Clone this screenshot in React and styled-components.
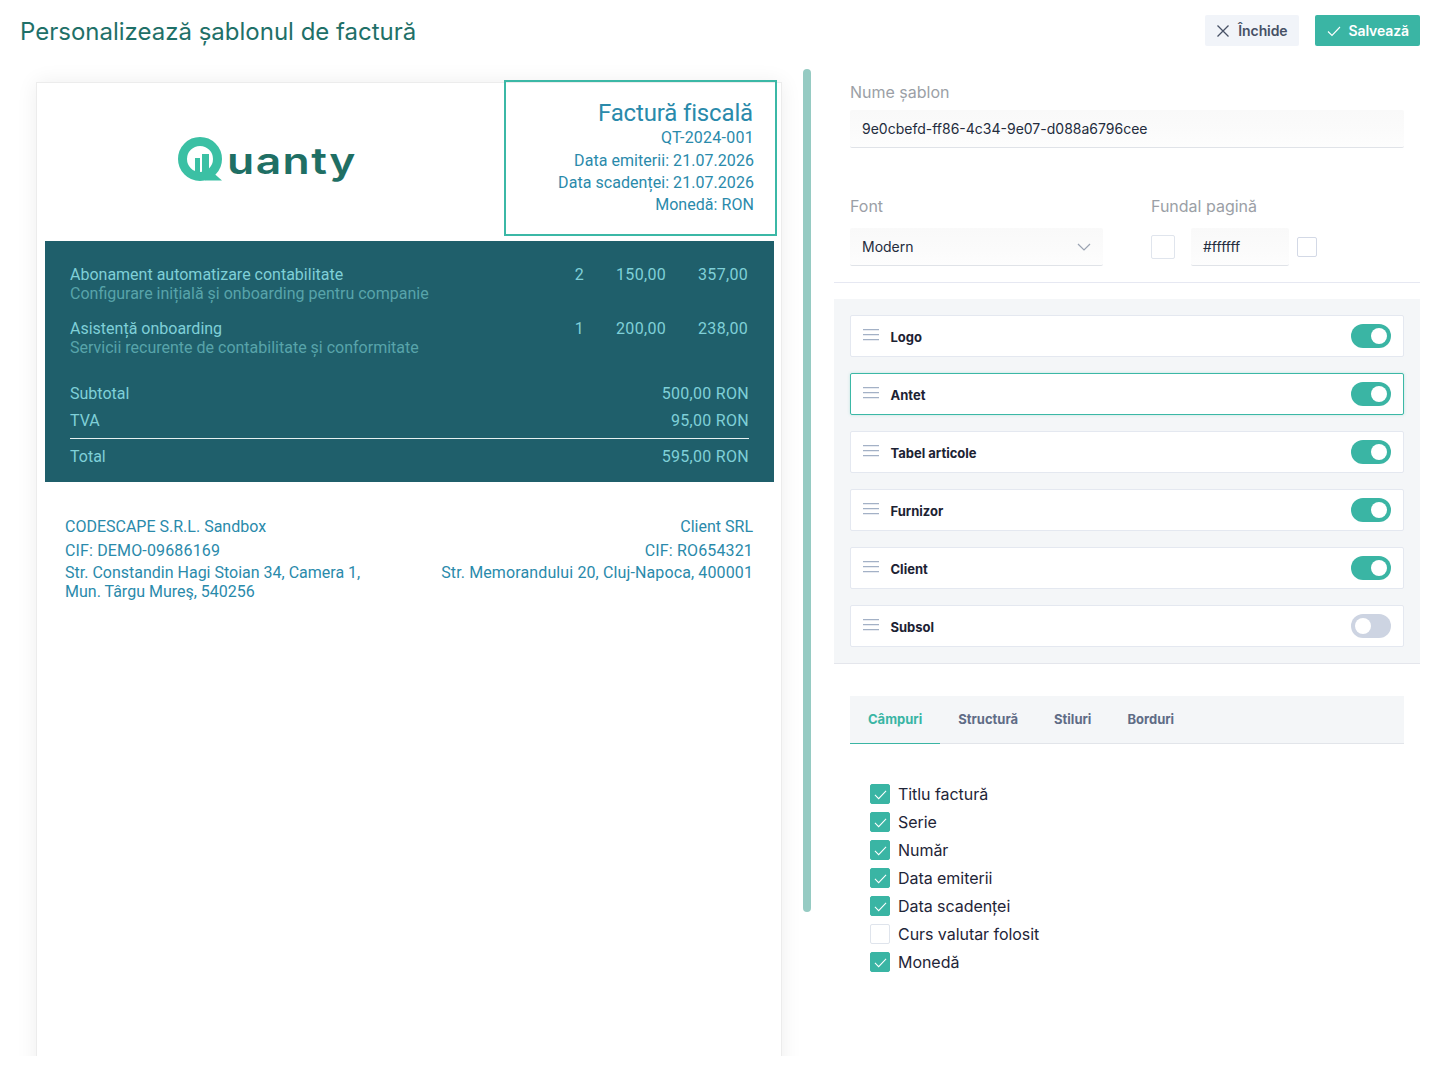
import React from "react";
import styled, { createGlobalStyle } from "styled-components";

const GlobalStyle = createGlobalStyle`
  html, body { margin: 0; padding: 0; background: #fff; }
  body { font-family: "Inter", "Liberation Sans", sans-serif; }
  * { box-sizing: border-box; }
`;

const Page = styled.div`
  width: 1439px;
  height: 1075px;
  overflow: hidden;
  background: #fff;
`;

const Header = styled.header`
  height: 61px;
  padding: 15px 19px 0 20px;
  display: flex;
  justify-content: space-between;
  align-items: flex-start;
`;

const Title = styled.h1`
  margin: 0;
  font-size: 24px;
  line-height: 33px;
  font-weight: 400;
  color: #1f7068;
`;

const Actions = styled.div`
  display: flex;
  gap: 16px;
`;

const Button = styled.button`
  height: 31px;
  padding: 0 11px 0 ${(p) => (p.$primary ? "12px" : "11px")};
  display: flex;
  align-items: center;
  gap: 8px;
  border: 0;
  border-radius: 2px;
  font-family: inherit;
  font-size: 14px;
  font-weight: 600;
  letter-spacing: -0.1px;
  background: ${(p) => (p.$primary ? "#3ab5a4" : "#f1f4f9")};
  color: ${(p) => (p.$primary ? "#fff" : "#475166")};
`;

const Body = styled.div`
  display: flex;
  height: 995px;
`;

const PreviewPane = styled.div`
  position: relative;
  width: 834px;
  height: 100%;
  padding: 21px 0 0 36px;
  overflow: hidden;
`;

const ScrollThumb = styled.div`
  position: absolute;
  left: 803px;
  top: 8px;
  width: 8px;
  height: 843px;
  border-radius: 4px;
  background: #96cbc3;
`;

const Paper = styled.div`
  width: 746px;
  min-height: 1100px;
  border: 1px solid #ececec;
  background: #fff;
  box-shadow: 0 0 20px rgba(0, 0, 0, 0.07);
  font-family: "Roboto", "Liberation Sans", sans-serif;
  font-size: 16px;
  line-height: 19px;
  color: #2a8aab;
`;

const PaperHead = styled.div`
  display: flex;
  margin-bottom: 5px;
`;

const LogoArea = styled.div`
  flex: 1;
  display: flex;
  align-items: center;
  justify-content: center;
  gap: 3px;
  padding-right: 27px;
`;

const LogoWord = styled.span`
  display: inline-block;
  font-family: "Inter", sans-serif;
  font-weight: 600;
  font-size: 37px;
  line-height: 44px;
  letter-spacing: 1.2px;
  color: #1f6f64;
  margin-top: 2px;
  transform: scaleX(1.2);
  transform-origin: left center;
`;

const InvoiceHead = styled.div`
  position: relative;
  width: 273px;
  height: 156px;
  margin: -3px 4px 0 0;
  padding: 17px 21px 0 0;
  border: 2px solid #3bb8a6;
  text-align: right;
`;

const InvoiceTitle = styled.div`
  font-size: 24px;
  line-height: 29px;
  letter-spacing: -0.15px;
  margin-right: 1px;
`;

const InvoiceNumber = styled.div`
  line-height: 22px;
  margin: -1px 0 1px;
  letter-spacing: 0.25px;
`;

const InvoiceLine = styled.div`
  line-height: 22px;
  letter-spacing: 0.05px;
`;

const ItemsBlock = styled.div`
  margin: 0 7px 0 8px;
  padding: 24px 25px 12px;
  background: #1f5f6b;
  color: #7fd0d8;
`;

const ItemRow = styled.div`
  display: flex;
  justify-content: space-between;
  padding-right: 1px;
  margin-bottom: 16px;
`;

const ItemSub = styled.div`
  color: #58a4aa;
`;

const ItemNums = styled.div`
  display: flex;
  gap: 32px;
`;

const ItemNum = styled.span`
  min-width: ${(p) => (p.$wide ? "50px" : "0")};
  text-align: right;
  letter-spacing: 0.3px;
`;

const TotalsBlock = styled.div`
  margin-top: 23px;
`;

const TotalRow = styled.div`
  display: flex;
  justify-content: space-between;
  line-height: 27px;
  ${(p) => p.$final && `
    margin-top: 4px;
    padding-top: 4px;
    border-top: 1px solid #e6f0f0;
  `}
`;

const TotalValue = styled.span`
  letter-spacing: 0.3px;
`;

const Parties = styled.div`
  display: flex;
  justify-content: space-between;
  padding: 35px 28px 0 28px;
`;

const Party = styled.div`
  width: ${(p) => (p.$right ? "auto" : "310px")};
  flex: none;
  text-align: ${(p) => (p.$right ? "right" : "left")};
`;

const PartyName = styled.div`
  margin-bottom: 5px;
`;

const PartyCif = styled.div`
  margin-bottom: 3px;
  letter-spacing: 0.15px;
`;

const AddressRight = styled.div`
  white-space: nowrap;
  letter-spacing: 0.12px;
`;

const Settings = styled.aside`
  width: 586px;
  height: 100%;
`;

const FieldGroup = styled.div`
  padding: ${(p) => p.$pad || "0 16px"};
`;

const FieldLabel = styled.div`
  font-size: 16px;
  line-height: 22px;
  color: #9b9fa6;
  margin-bottom: ${(p) => p.$gap || "7px"};
`;

const TextBox = styled.div`
  height: 38px;
  display: flex;
  align-items: center;
  justify-content: space-between;
  padding: 0 12px;
  font-size: 14px;
  color: #232c3d;
  border-bottom: 1px solid #e0e3e8;
  border-radius: 2px;
  background: linear-gradient(180deg, #f9f9f9 0%, #fbfbfb 60%, #fdfdfd 100%);
  width: ${(p) => p.$width || "auto"};
`;

const FieldRow = styled.div`
  display: flex;
  gap: 48px;
  margin-top: 47px;
  padding: 0 16px 16px;
  border-bottom: 1px solid #e6e8f2;
`;

const ColorRow = styled.div`
  display: flex;
  align-items: center;
`;

const Swatch = styled.div`
  width: ${(p) => p.$size}px;
  height: ${(p) => p.$size}px;
  border: 1px solid ${(p) => (p.$size === 20 ? "#d3d9e6" : "#e0e5ed")};
  border-radius: 2px;
  background: #fff;
`;

const HexGap = styled.div`
  margin: 0 8px 0 16px;
`;

const BlocksPanel = styled.div`
  margin-top: 16px;
  padding: 16px;
  display: flex;
  flex-direction: column;
  gap: 16px;
  background: #f4f6f8;
  border-bottom: 1px solid #e4e6ec;
`;

const BlockRow = styled.div`
  height: 42px;
  display: flex;
  align-items: center;
  padding: 0 12px;
  background: #fff;
  border: 1px solid ${(p) => (p.$active ? "#3bb8a6" : "#e4e8f0")};
  border-radius: 2px;
  box-shadow: ${(p) => (p.$active ? "0 0 3px rgba(59,184,166,.3)" : "none")};
`;

const BlockName = styled.span`
  flex: 1;
  margin-left: 11.5px;
  padding-top: 2px;
  font-size: 13px;
  font-weight: 700;
  color: #1c2233;
`;

const Toggle = styled.div`
  width: 40px;
  height: 24px;
  padding: 4px;
  border-radius: 12px;
  display: flex;
  justify-content: ${(p) => (p.$on ? "flex-end" : "flex-start")};
  background: ${(p) => (p.$on ? "#3ab5a4" : "#cdd4e2")};
`;

const Knob = styled.div`
  width: 16px;
  height: 16px;
  border-radius: 50%;
  background: #fff;
`;

const TabBar = styled.div`
  display: flex;
  height: 48px;
  margin: 32px 16px 0;
  background: #f4f6f8;
  border-bottom: 1px solid #e2e5ea;
`;

const Tab = styled.div`
  height: 48px;
  padding: 0 18px 2px;
  display: flex;
  align-items: center;
  font-size: 13px;
  font-weight: 700;
  color: ${(p) => (p.$active ? "#3ab5a4" : "#5f6c86")};
  border-bottom: 1px solid ${(p) => (p.$active ? "#3ab5a4" : "transparent")};
`;

const CheckList = styled.div`
  margin: 40px 0 0 36px;
  display: flex;
  flex-direction: column;
  gap: 8px;
`;

const CheckRow = styled.label`
  display: flex;
  align-items: center;
  gap: 8px;
  font-size: 16px;
  line-height: 20px;
  letter-spacing: -0.05px;
  color: #1f2538;
`;

const CheckBox = styled.span`
  width: 20px;
  height: 20px;
  display: flex;
  align-items: center;
  justify-content: center;
  border-radius: 2px;
  border: 1px solid ${(p) => (p.$on ? "#3ab5a4" : "#dfe4ec")};
  background: ${(p) => (p.$on ? "#3ab5a4" : "#fff")};
`;

const DragSvg = styled.svg`
  margin-top: -2px;
`;

const CloseIcon = () => (
  <svg width="14" height="14" viewBox="0 0 14 14" fill="none" stroke="#475166" strokeWidth="1.3">
    <path d="M1.5 1.5 12.5 12.5M12.5 1.5 1.5 12.5" />
  </svg>
);

const CheckIcon = ({ size = 14, color = "#fff", width = 1.1 }) => (
  <svg width={size} height={size} viewBox="0 0 14 14" fill="none" stroke={color} strokeWidth={width}>
    <path d="M1 7.5 5 11.5 13 3" />
  </svg>
);

const Chevron = () => (
  <svg width="14" height="8" viewBox="0 0 14 8" fill="none" stroke="#9aa3b2" strokeWidth="1.2">
    <path d="M1 1 7 7 13 1" />
  </svg>
);

const DragIcon = () => (
  <DragSvg width="16" height="12" viewBox="0 0 16 12" fill="none" stroke="#a3b1c6" strokeWidth="1.2">
    <path d="M0 .6H16M0 5.6H16M0 10.6H16" />
  </DragSvg>
);

const QuantyMark = () => (
  <svg width="46" height="46" viewBox="0 0 46 46">
    <circle cx="22" cy="22" r="17.5" fill="none" stroke="#3bc0a4" strokeWidth="9" />
    <path d="M28 33 36 36.5 44 43.5H27Z" fill="#3bc0a4" />
    <rect x="17" y="21" width="5" height="18" fill="#3bc0a4" />
    <rect x="24" y="17" width="7" height="22" fill="#3bc0a4" />
  </svg>
);

const items = [
  { name: "Abonament automatizare contabilitate", sub: "Configurare inițială și onboarding pentru companie", qty: 2, price: "150,00", total: "357,00" },
  { name: "Asistență onboarding", sub: "Servicii recurente de contabilitate și conformitate", qty: 1, price: "200,00", total: "238,00" },
];

const blocks = [
  { name: "Logo", on: true },
  { name: "Antet", on: true, active: true },
  { name: "Tabel articole", on: true },
  { name: "Furnizor", on: true },
  { name: "Client", on: true },
  { name: "Subsol", on: false },
];

const tabs = ["Câmpuri", "Structură", "Stiluri", "Borduri"];

const fields = [
  { label: "Titlu factură", on: true },
  { label: "Serie", on: true },
  { label: "Număr", on: true },
  { label: "Data emiterii", on: true },
  { label: "Data scadenței", on: true },
  { label: "Curs valutar folosit", on: false },
  { label: "Monedă", on: true },
];

export default function App() {
  return (
    <Page>
      <GlobalStyle />
      <Header>
        <Title>Personalizează șablonul de factură</Title>
        <Actions>
          <Button><CloseIcon />Închide</Button>
          <Button $primary><CheckIcon />Salvează</Button>
        </Actions>
      </Header>
      <Body>
        <PreviewPane>
          <Paper>
            <PaperHead>
              <LogoArea>
                <QuantyMark />
                <LogoWord>uanty</LogoWord>
              </LogoArea>
              <InvoiceHead>
                <InvoiceTitle>Factură fiscală</InvoiceTitle>
                <InvoiceNumber>QT-2024-001</InvoiceNumber>
                <InvoiceLine>Data emiterii: 21.07.2026</InvoiceLine>
                <InvoiceLine>Data scadenței: 21.07.2026</InvoiceLine>
                <InvoiceLine>Monedă: RON</InvoiceLine>
              </InvoiceHead>
            </PaperHead>
            <ItemsBlock>
              {items.map((it) => (
                <ItemRow key={it.name}>
                  <div>
                    <div>{it.name}</div>
                    <ItemSub>{it.sub}</ItemSub>
                  </div>
                  <ItemNums>
                    <ItemNum>{it.qty}</ItemNum>
                    <ItemNum $wide>{it.price}</ItemNum>
                    <ItemNum $wide>{it.total}</ItemNum>
                  </ItemNums>
                </ItemRow>
              ))}
              <TotalsBlock>
                <TotalRow><span>Subtotal</span><TotalValue>500,00 RON</TotalValue></TotalRow>
                <TotalRow><span>TVA</span><TotalValue>95,00 RON</TotalValue></TotalRow>
                <TotalRow $final><span>Total</span><TotalValue>595,00 RON</TotalValue></TotalRow>
              </TotalsBlock>
            </ItemsBlock>
            <Parties>
              <Party>
                <PartyName>CODESCAPE S.R.L. Sandbox</PartyName>
                <PartyCif>CIF: DEMO-09686169</PartyCif>
                <div>Str. Constandin Hagi Stoian 34, Camera 1, Mun. Târgu Mureş, 540256</div>
              </Party>
              <Party $right>
                <PartyName>Client SRL</PartyName>
                <PartyCif>CIF: RO654321</PartyCif>
                <AddressRight>Str. Memorandului 20, Cluj-Napoca, 400001</AddressRight>
              </Party>
            </Parties>
          </Paper>
          <ScrollThumb />
        </PreviewPane>
        <Settings>
          <FieldGroup $pad="20px 16px 0">
            <FieldLabel>Nume șablon</FieldLabel>
            <TextBox>9e0cbefd-ff86-4c34-9e07-d088a6796cee</TextBox>
          </FieldGroup>
          <FieldRow>
            <div>
              <FieldLabel $gap="11px">Font</FieldLabel>
              <TextBox $width="253px">Modern<Chevron /></TextBox>
            </div>
            <div>
              <FieldLabel $gap="11px">Fundal pagină</FieldLabel>
              <ColorRow>
                <Swatch $size={24} />
                <HexGap><TextBox $width="98px">#ffffff</TextBox></HexGap>
                <Swatch $size={20} />
              </ColorRow>
            </div>
          </FieldRow>
          <BlocksPanel>
            {blocks.map((b) => (
              <BlockRow key={b.name} $active={b.active}>
                <DragIcon />
                <BlockName>{b.name}</BlockName>
                <Toggle $on={b.on}><Knob /></Toggle>
              </BlockRow>
            ))}
          </BlocksPanel>
          <TabBar>
            {tabs.map((t, i) => (
              <Tab key={t} $active={i === 0}>{t}</Tab>
            ))}
          </TabBar>
          <CheckList>
            {fields.map((f) => (
              <CheckRow key={f.label}>
                <CheckBox $on={f.on}>{f.on && <CheckIcon size={13} />}</CheckBox>
                {f.label}
              </CheckRow>
            ))}
          </CheckList>
        </Settings>
      </Body>
    </Page>
  );
}
